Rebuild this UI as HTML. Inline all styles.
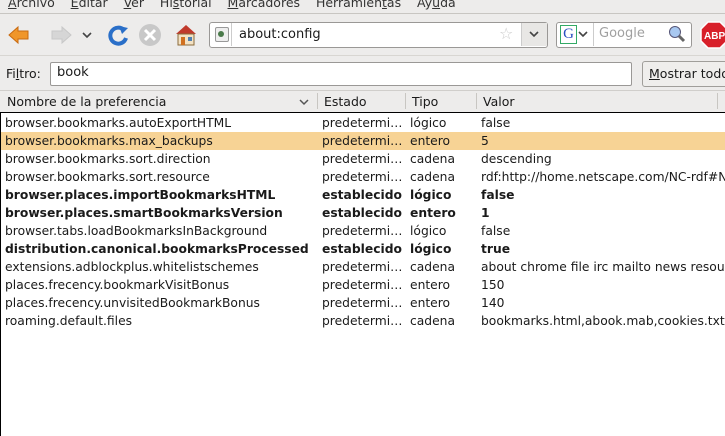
<html><head><style>
body{margin:0;width:725px;height:435px;overflow:hidden;background:#edeceb;font-family:"DejaVu Sans","Liberation Sans",sans-serif;font-size:12px;color:#1a1a1a;position:relative}
.a{position:absolute;white-space:nowrap}
u{text-decoration:underline}
.row{position:absolute;left:1px;width:724px;height:18px;line-height:19px;font-size:12.3px}
.row span{position:absolute;top:0;white-space:nowrap;overflow:hidden}
.c1{left:4px;width:312px}.c2{left:321px;width:82px;text-overflow:ellipsis}.c3{left:409px;width:66px}.c4{left:480px}
.b{font-weight:bold}
</style></head><body>
<div class="a" style="top:-5px;left:8px;font-size:12.5px;color:#333">
<span><u>A</u>rchivo</span>&nbsp;&nbsp;&nbsp;&nbsp;<span><u>E</u>ditar</span>&nbsp;&nbsp;&nbsp;&nbsp;<span><u>V</u>er</span>&nbsp;&nbsp;&nbsp;&nbsp;<span>Hi<u>s</u>torial</span>&nbsp;&nbsp;&nbsp;&nbsp;<span><u>M</u>arcadores</span>&nbsp;&nbsp;&nbsp;&nbsp;<span>Herramien<u>t</u>as</span>&nbsp;&nbsp;&nbsp;&nbsp;<span>Ay<u>u</u>da</span></div>
<div class="a" style="top:13px;left:0;width:725px;height:1px;background:#c8c6c2"></div>
<svg class="a" style="top:22px;left:6px" width="200" height="26">
<path d="M3 13 L12 5 L12 9 L22 9 L22 17 L12 17 L12 21 Z" fill="#f0962a" stroke="#c86a10"/>
<path d="M65 13 L56 5 L56 9 L46 9 L46 17 L56 17 L56 21 Z" fill="#d6d6d6" stroke="#c8c8c8"/>
<path d="M77 11 L81 15 L85 11" fill="none" stroke="#444" stroke-width="1.6"/>
<path d="M118 8 A8 8 0 1 0 120 16" fill="none" stroke="#2a6fc8" stroke-width="4"/>
<path d="M113 4 L122 6 L116 12 Z" fill="#2a6fc8"/>
<circle cx="144" cy="13" r="11" fill="#c8c8c8"/><path d="M139 8 L149 18 M149 8 L139 18" stroke="#fff" stroke-width="3"/>
<path d="M170 12 L180 3 L190 12 Z" fill="#c0392b"/><rect x="172" y="12" width="16" height="11" fill="#f3e2c4" stroke="#8a6a3a"/><rect x="175" y="15" width="4" height="8" fill="#d07020"/><rect x="182" y="15" width="4" height="4" fill="#5080b0"/>
</svg>
<div class="a" style="top:22px;left:209px;width:337px;height:24px;background:#fff;border:1px solid #9a9896;border-radius:3px"></div>
<div class="a" style="top:27px;left:215px;width:12px;height:13px;border:1px solid #999;background:#eee;border-radius:2px"></div>
<div class="a" style="top:31px;left:218px;width:6px;height:6px;border-radius:3px;background:#4a7a4a"></div>
<div class="a" style="top:23px;left:231px;width:1px;height:23px;background:#ccc"></div>
<div class="a" style="top:25px;left:239px;font-size:13px;line-height:20px">about:config</div>
<div class="a" style="top:24px;left:499px;color:#ccc;font-size:16px">☆</div>
<div class="a" style="top:23px;left:521px;width:25px;height:23px;background:#e8e7e5;border-left:1px solid #ccc"></div>
<svg class="a" style="top:30px;left:528px" width="12" height="8"><path d="M2 2 L6 6 L10 2" fill="none" stroke="#444" stroke-width="1.6"/></svg>
<div class="a" style="top:22px;left:556px;width:134px;height:24px;background:#fff;border:1px solid #9a9896;border-radius:3px"></div>
<div class="a" style="top:25px;left:560px;width:15px;height:17px;border:1px solid #3a6;color:#2a4fc0;font-size:15px;line-height:17px;text-align:center;font-family:'Liberation Serif',serif">G</div>
<svg class="a" style="top:30px;left:577px" width="12" height="8"><path d="M2 2 L6 6 L10 2" fill="none" stroke="#444" stroke-width="1.6"/></svg>
<div class="a" style="top:23px;left:593px;width:1px;height:23px;background:#ccc"></div>
<div class="a" style="top:26px;left:599px;color:#a0a0a0;font-size:13px">Google</div>
<svg class="a" style="top:25px;left:668px" width="18" height="18"><circle cx="7" cy="7" r="5.5" fill="#a8c8f0" stroke="#557"/><path d="M11 11 L16 16" stroke="#666" stroke-width="3"/></svg>
<svg class="a" style="top:21px;left:700px" width="28" height="28"><polygon points="8,1 20,1 27,8 27,20 20,27 8,27 1,20 1,8" fill="#d8202a" stroke="#fff" stroke-width="1.5"/><text x="4" y="18" font-size="10" font-weight="bold" fill="#fff" font-family="Liberation Sans">ABP</text></svg>
<div class="a" style="top:55px;left:0;width:725px;height:1px;background:#d8d6d2"></div>
<div class="a" style="top:66px;left:6px;font-size:12.5px">Fi<u>l</u>tro:</div>
<div class="a" style="top:62px;left:50px;width:580px;height:22px;background:#fff;border:1px solid #9a9896;border-radius:2px"></div>
<div class="a" style="top:65px;left:57px;font-size:13px">book</div>
<div class="a" style="top:61px;left:642px;width:100px;height:24px;background:#efeeec;border:1px solid #a09e9a;border-radius:3px"></div>
<div class="a" style="top:66px;left:649px;font-size:12.5px"><u>M</u>ostrar todo</div>
<div class="a" style="top:90px;left:0;width:725px;height:22px;background:#edeceb;border-top:1px solid #d0cecb"></div>
<div class="a" style="top:94px;left:7px;font-size:12.5px">Nombre de la preferencia</div>
<svg class="a" style="top:98px;left:298px" width="12" height="8"><path d="M2 2 L6 6 L10 2" fill="none" stroke="#555" stroke-width="1.5"/></svg>
<div class="a" style="top:93px;left:317px;width:1px;height:16px;background:#c8c6c2"></div>
<div class="a" style="top:94px;left:324px;font-size:12.5px">Estado</div>
<div class="a" style="top:93px;left:405px;width:1px;height:16px;background:#c8c6c2"></div>
<div class="a" style="top:94px;left:412px;font-size:12.5px">Tipo</div>
<div class="a" style="top:93px;left:476px;width:1px;height:16px;background:#c8c6c2"></div>
<div class="a" style="top:94px;left:483px;font-size:12.5px">Valor</div>
<div class="a" style="top:93px;left:717px;width:1px;height:16px;background:#c8c6c2"></div>
<div class="a" style="top:112px;left:0;width:725px;height:323px;background:#fff;border-top:1px solid #000;border-left:1px solid #000"></div>
<div class="row" style="top:114px"><span class="c1">browser.bookmarks.autoExportHTML</span><span class="c2">predeterminado</span><span class="c3">lógico</span><span class="c4">false</span></div>
<div class="row" style="top:132px;background:#f7d395"><span class="c1">browser.bookmarks.max_backups</span><span class="c2">predeterminado</span><span class="c3">entero</span><span class="c4">5</span></div>
<div class="row" style="top:150px"><span class="c1">browser.bookmarks.sort.direction</span><span class="c2">predeterminado</span><span class="c3">cadena</span><span class="c4">descending</span></div>
<div class="row" style="top:168px"><span class="c1">browser.bookmarks.sort.resource</span><span class="c2">predeterminado</span><span class="c3">cadena</span><span class="c4">rdf:http://home.netscape.com/NC-rdf#Name</span></div>
<div class="row b" style="top:186px"><span class="c1">browser.places.importBookmarksHTML</span><span class="c2">establecido</span><span class="c3">lógico</span><span class="c4">false</span></div>
<div class="row b" style="top:204px"><span class="c1">browser.places.smartBookmarksVersion</span><span class="c2">establecido</span><span class="c3">entero</span><span class="c4">1</span></div>
<div class="row" style="top:222px"><span class="c1">browser.tabs.loadBookmarksInBackground</span><span class="c2">predeterminado</span><span class="c3">lógico</span><span class="c4">false</span></div>
<div class="row b" style="top:240px"><span class="c1">distribution.canonical.bookmarksProcessed</span><span class="c2">establecido</span><span class="c3">lógico</span><span class="c4">true</span></div>
<div class="row" style="top:258px"><span class="c1">extensions.adblockplus.whitelistschemes</span><span class="c2">predeterminado</span><span class="c3">cadena</span><span class="c4">about chrome file irc mailto news resource</span></div>
<div class="row" style="top:276px"><span class="c1">places.frecency.bookmarkVisitBonus</span><span class="c2">predeterminado</span><span class="c3">entero</span><span class="c4">150</span></div>
<div class="row" style="top:294px"><span class="c1">places.frecency.unvisitedBookmarkBonus</span><span class="c2">predeterminado</span><span class="c3">entero</span><span class="c4">140</span></div>
<div class="row" style="top:312px"><span class="c1">roaming.default.files</span><span class="c2">predeterminado</span><span class="c3">cadena</span><span class="c4">bookmarks.html,abook.mab,cookies.txt</span></div>
</body></html>
